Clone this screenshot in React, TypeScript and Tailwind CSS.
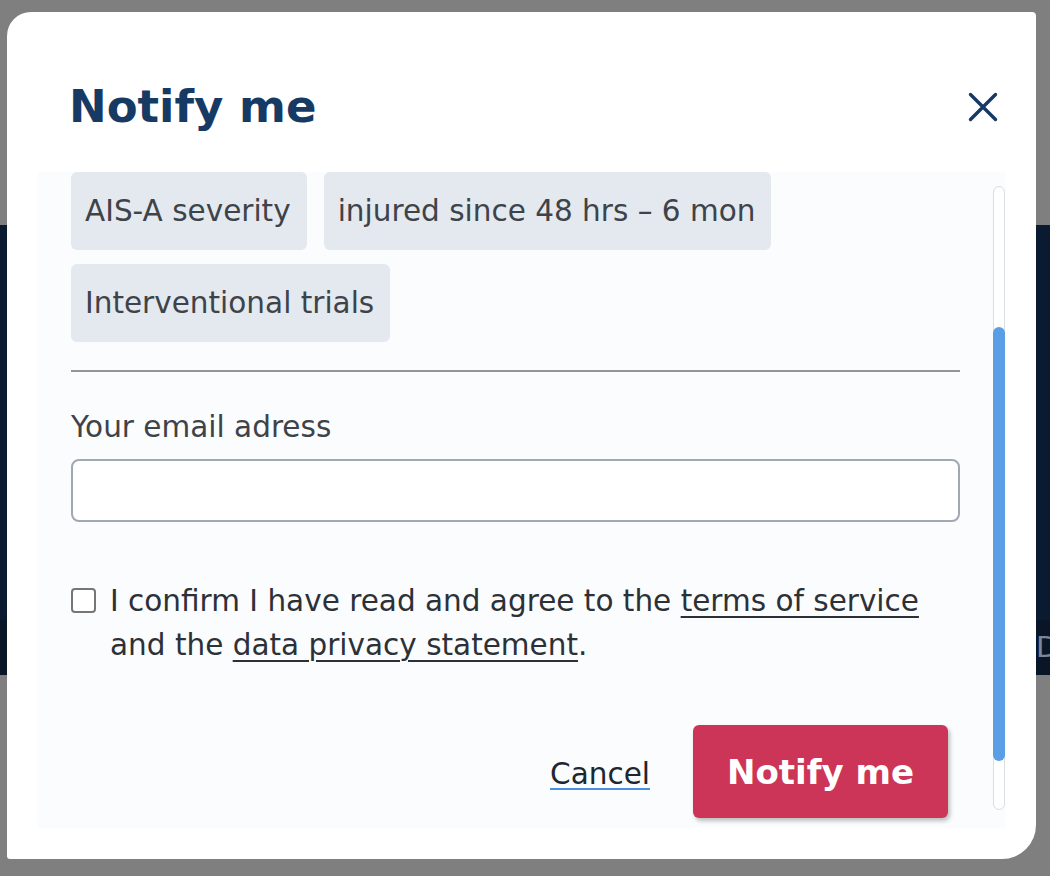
import { useState } from "react";

const chips = ["AIS-A severity", "injured since 48 hrs – 6 mon", "Interventional trials"];

const NotifyModal = () => {
  const [email, setEmail] = useState("");
  const [agreed, setAgreed] = useState(false);

  return (
    <div className="absolute left-[7px] top-[12px] w-[1029px] h-[847px] bg-white rounded-tl-[24px] rounded-tr-[4px] rounded-br-[34px] rounded-bl-[3px] flex flex-col">
      {/* Header */}
      <div className="flex items-center justify-between pl-[62px] pr-[38px] pt-[68px] pb-[38px]">
        <h2 className="text-[45px] leading-[54px] font-bold text-[#173a64]">Notify me</h2>
        <button className="text-[#173a64]" aria-label="Close">
          <svg width="30" height="30" viewBox="0 0 30 30" fill="none" stroke="currentColor" strokeWidth="3.4" strokeLinecap="round">
            <path d="M2.5 2.5l25 25M27.5 2.5l-25 25" />
          </svg>
        </button>
      </div>

      {/* Scrollable body */}
      <div className="relative mx-[31px] h-[656px] bg-[#fbfcfd] overflow-hidden">
        <div className="pl-[33px] pr-[45px] pb-[9px] text-[29.5px] leading-[44px] text-[#2c3138]">
          <div className="flex flex-wrap gap-x-[17px] gap-y-[14px]">
            {chips.map((chip) => (
              <span key={chip} className="bg-[#e3e9ef] text-[#3e4349] rounded-[6px] pl-[14px] pr-[16px] py-[17px]">
                {chip}
              </span>
            ))}
          </div>

          <div className="mt-[28px] h-[2px] bg-[#959595]" />

          <label className="block mt-[33px] text-[#3e4349]">Your email adress</label>
          <input
            type="email"
            value={email}
            onChange={(e) => setEmail(e.target.value)}
            className="mt-[10px] block w-full h-[63px] bg-white border-2 border-[#a0a8b2] rounded-[8px] px-4 outline-none"
          />

          <div className="mt-[57px] flex items-start gap-[14px]">
            <button
              onClick={() => setAgreed(!agreed)}
              className="mt-[9px] shrink-0 w-[25px] h-[25px] border-2 border-[#767676] rounded-[4px] bg-white"
            />
            <p>
              I confirm I have read and agree to the{" "}
              <a className="underline decoration-2 underline-offset-[5px]">terms of service</a>
              <br />
              and the <a className="underline decoration-2 underline-offset-[5px]">data privacy statement</a>.
            </p>
          </div>

          <div className="mt-[58px] flex items-center justify-end gap-[43px] pr-[12px]">
            <a className="text-[#1d2733] underline decoration-2 decoration-[#4a90e2] underline-offset-[4px] mt-[4px]">Cancel</a>
            <button className="w-[255px] h-[93px] bg-[#cc3557] text-white text-[34px] font-bold rounded-[6px] shadow-[2px_3px_4px_rgba(0,0,0,0.25)]">
              Notify me
            </button>
          </div>
        </div>

        {/* Scrollbar */}
        <div className="absolute left-[955px] top-[14px] w-[12px] h-[624px] bg-white border border-[#dadde2] rounded-full">
          <div className="absolute -left-px top-[140px] w-[12px] h-[434px] bg-[#5a9ee6] rounded-full" />
        </div>
      </div>
    </div>
  );
};

export default function App() {
  return (
    <div className="relative w-[1050px] h-[876px] overflow-hidden bg-[#7f7f7f]" style={{ fontFamily: '"DejaVu Sans", sans-serif' }}>
      {/* Page behind the overlay */}
      <div className="h-[225px]" />
      <div className="h-[395px] bg-[#0a1a31]" />
      <div className="h-[55px] bg-[#081628] flex items-center overflow-hidden">
        <span className="pl-[1036px] text-[29px] text-[#7d8796] whitespace-nowrap">Dashboard</span>
      </div>

      <NotifyModal />
    </div>
  );
}
